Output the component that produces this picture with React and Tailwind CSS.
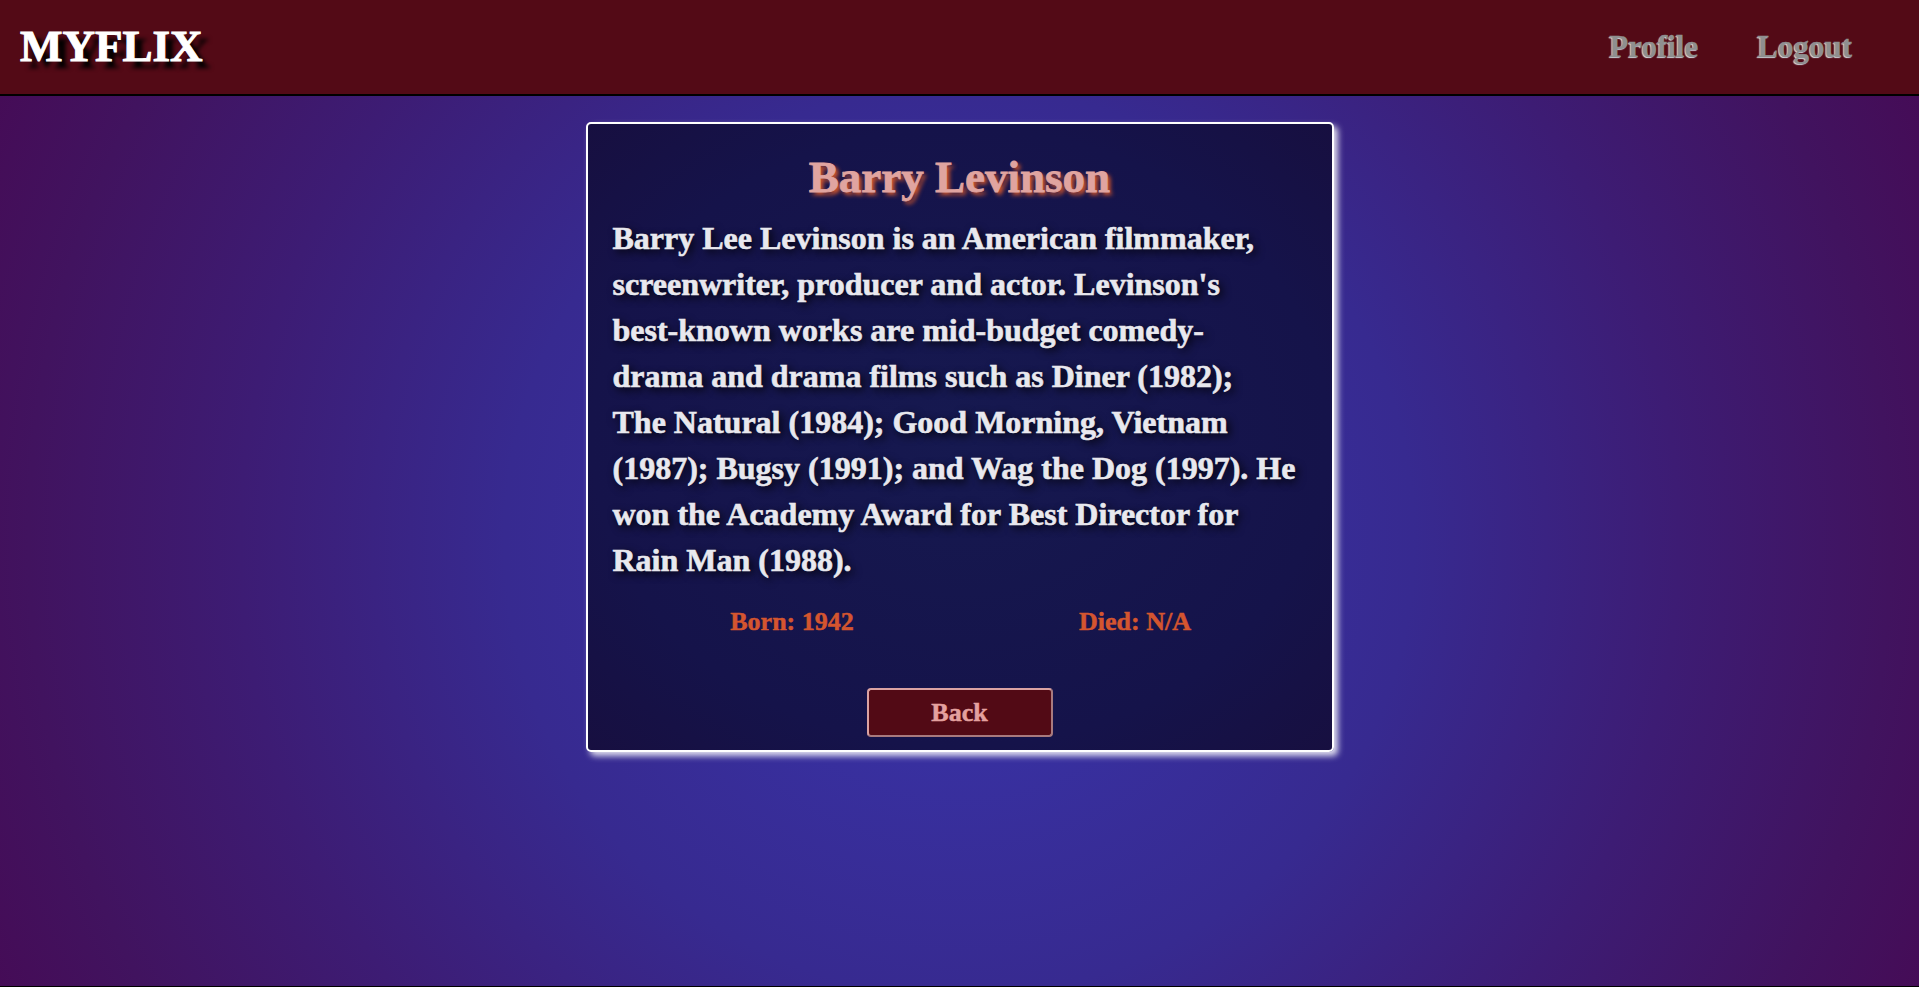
export default function App() {
  const bio = [
    'Barry Lee Levinson is an American filmmaker,',
    "screenwriter, producer and actor. Levinson's",
    'best-known works are mid-budget comedy-',
    'drama and drama films such as Diner (1982);',
    'The Natural (1984); Good Morning, Vietnam',
    '(1987); Bugsy (1991); and Wag the Dog (1997). He',
    'won the Academy Award for Best Director for',
    'Rain Man (1988).',
  ];

  return (
    <div className="min-h-screen flex flex-col font-['Liberation_Serif',serif] font-bold">
      <nav className="h-[96px] shrink-0 bg-[#530a16] border-b-2 border-black flex items-center justify-between pl-5 pr-[67px]">
        <span className="text-[45px] text-white [-webkit-text-stroke:1px_#fff] [text-shadow:8px_7px_4px_#000]">MYFLIX</span>
        <div className="flex gap-[59px] text-[31px] text-[#8f8f8f] [-webkit-text-stroke:0.4px_#8f8f8f] [text-shadow:-1px_1px_1px_#dde4ec]">
          <a href="#">Profile</a>
          <a href="#">Logout</a>
        </div>
      </nav>

      <main className="flex-1 border-b border-black bg-[radial-gradient(circle_at_center,#3634a8_0%,#3830a0_20%,#372a90_43%,#3d1c74_68%,#41135f_88%,#450c57_100%)]">
        <div className="w-[748px] mx-auto mt-[26px] border-2 border-white rounded-[5px] bg-[radial-gradient(ellipse_at_center,#161950_0%,#15134a_70%,#170f40_100%)] shadow-[4px_4px_6px_rgba(255,255,255,0.85)] pt-[27px] pb-[13px] px-[25px]">
          <h1 className="text-center text-[45px] leading-[52px] text-[#e0a4a0] [-webkit-text-stroke:0.8px_#e0a4a0] [text-shadow:3px_3px_4px_#d4572b]">
            Barry Levinson
          </h1>
          <p className="mt-[12px] text-[32px] leading-[46px] text-[#e8e8ee] [-webkit-text-stroke:0.6px_#e8e8ee] [text-shadow:3px_3px_8px_#000]">
            {bio.map((line, i) => (
              <span key={i} className="block whitespace-nowrap">{line}</span>
            ))}
          </p>
          <div className="mt-[21px] grid grid-cols-2 pl-[8px] text-center text-[26px] leading-[36px] text-[#d4552f] [-webkit-text-stroke:0.5px_#d4552f]">
            <span>Born: 1942</span>
            <span>Died: N/A</span>
          </div>
          <div className="mt-[48px] flex justify-center">
            <button className="w-[186px] h-[49px] rounded-[4px] border-2 border-t-[#dba3a3] border-l-[#dba3a3] border-r-[#a87a7e] border-b-[#a87a7e] bg-[#520a15] text-[26px] text-[#e4a19f] [-webkit-text-stroke:0.5px_#e4a19f] font-bold">
              Back
            </button>
          </div>
        </div>
      </main>
    </div>
  );
}
